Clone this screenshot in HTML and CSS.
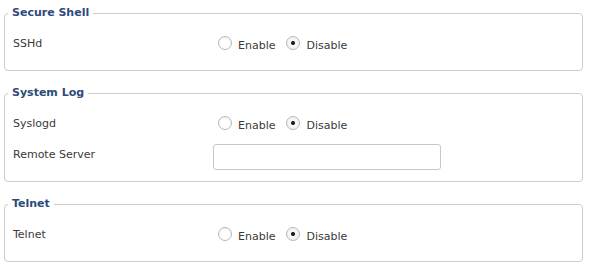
FILE: index.html
```html
<!DOCTYPE html>
<html>
<head>
<meta charset="utf-8">
<link rel="stylesheet" href="styles.css">
</head>
<body>
<div class="page">
  <fieldset class="section">
    <legend class="section-title">Secure Shell</legend>
    <div class="row">
      <label class="row-label">SSHd</label>
      <div class="row-ctrl">
        <input type="radio" class="radio" name="ssh"><span class="opt">Enable</span>
        <input type="radio" class="radio" name="ssh" checked><span class="opt">Disable</span>
      </div>
    </div>
  </fieldset>
  <fieldset class="section">
    <legend class="section-title">System Log</legend>
    <div class="row">
      <label class="row-label">Syslogd</label>
      <div class="row-ctrl">
        <input type="radio" class="radio" name="sys"><span class="opt">Enable</span>
        <input type="radio" class="radio" name="sys" checked><span class="opt">Disable</span>
      </div>
    </div>
    <div class="row">
      <label class="row-label">Remote Server</label>
      <div class="row-ctrl">
        <input type="text" class="text-input">
      </div>
    </div>
  </fieldset>
  <fieldset class="section section-last">
    <legend class="section-title">Telnet</legend>
    <div class="row">
      <label class="row-label">Telnet</label>
      <div class="row-ctrl">
        <input type="radio" class="radio" name="tel"><span class="opt">Enable</span>
        <input type="radio" class="radio" name="tel" checked><span class="opt">Disable</span>
      </div>
    </div>
  </fieldset>
</div>
</body>
</html>
```
FILE: styles.css
```css
html, body {
  margin: 0;
  padding: 0;
  background: #ffffff;
}
body {
  font-family: "DejaVu Sans", sans-serif;
  font-size: 11px;
  color: #3a3a3a;
}
.page {
  padding: 0 15px 0 4px;
  display: flex;
  flex-direction: column;
  gap: 15px;
}
.section {
  margin: 6px 0 0 0;
  padding: 8px 0 11px 3px;
  border: 1px solid #cccccc;
  border-radius: 4px;
  min-width: 0;
}
.section + .section {
  margin-top: 0;
}
.section-last {
  margin-top: 1px;
}
.section-title {
  padding: 0 4px;
  font-weight: bold;
  font-size: 11px;
  line-height: 14px;
  color: #2d4b7a;
}
.row {
  display: grid;
  grid-template-columns: 200px 1fr;
  align-items: center;
  height: 31px;
  padding-left: 5px;
}
.row-label {
  line-height: 14px;
}
.row-ctrl {
  display: flex;
  align-items: center;
}
.radio {
  appearance: none;
  -webkit-appearance: none;
  width: 14px;
  height: 14px;
  margin: 0 6px 2px 5px;
  border: 1px solid #b8b8b8;
  border-radius: 50%;
  background: radial-gradient(circle at 50% 60%, #ffffff 45%, #ececec 100%);
  box-sizing: border-box;
}
.radio:checked {
  background: radial-gradient(circle, #222 0, #222 1.6px, #f8f8f8 2.4px, #ececec 100%);
}
.opt {
  margin-top: 4px;
  margin-right: 6px;
}
.text-input {
  width: 228px;
  height: 26px;
  margin: 5px 0 0 0;
  box-sizing: border-box;
  border: 1px solid #c8c8c8;
  border-radius: 3px;
  background: #fff;
  padding: 2px 5px;
  font-family: "DejaVu Sans", sans-serif;
  font-size: 11px;
}
```
